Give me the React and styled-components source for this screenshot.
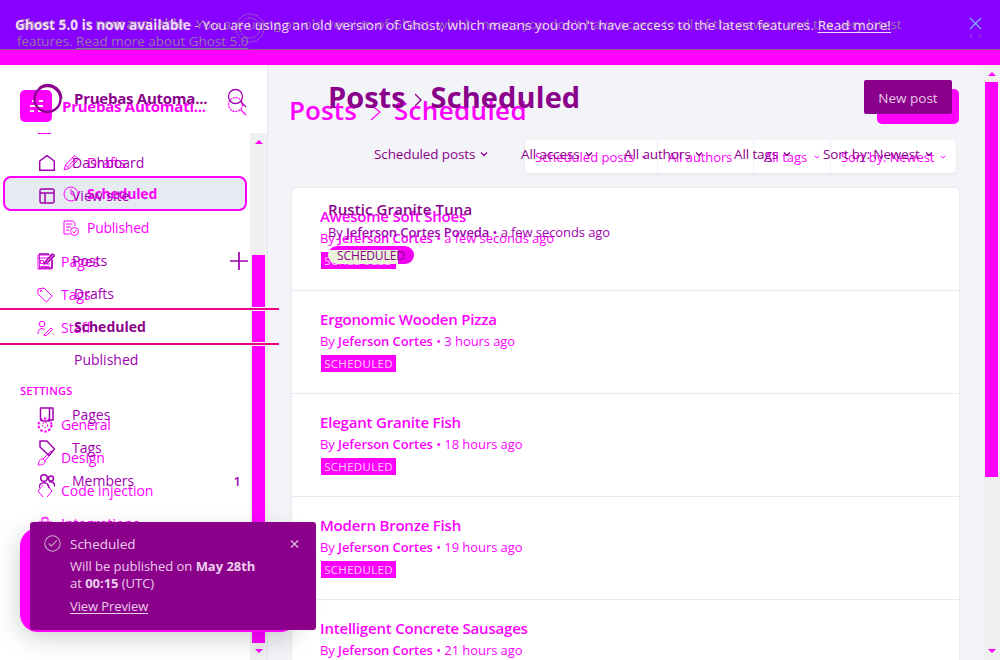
import React from "react";
import styled, { createGlobalStyle } from "styled-components";

const HOT = "#ff00ff";
const DARK = "#8b008b";
const VIOLET = "#a000b0";

const Global = createGlobalStyle`
  * { box-sizing: border-box; }
  body { margin: 0; background: #fff; overflow: hidden; font-family: "Open Sans", "Noto Sans", sans-serif; }
`;

const Page = styled.div`
  position: relative;
  width: 1000px;
  height: 660px;
  overflow: hidden;
  display: flex;
  flex-direction: column;
`;

const Overlay = styled.div`
  position: absolute;
  inset: 0;
  display: flex;
  flex-direction: column;
  pointer-events: none;
`;

const Text = styled.span`
  display: block;
  white-space: pre;
  flex: none;
  font-size: ${(p) => p.$size || 14}px;
  font-weight: ${(p) => p.$weight || 400};
  letter-spacing: ${(p) => p.$track || 0}px;
  line-height: ${(p) => p.$line || 20}px;
  color: ${(p) => p.$color || HOT};
  b { font-weight: ${(p) => p.$strong || 600}; }
  u { text-underline-offset: 2px; }
`;

const Banner = styled.header`
  flex: none;
  height: 65px;
  background: linear-gradient(#8800ff 49px, #8c5c9c 49px, #8c5c9c 50px, ${HOT} 50px);
  padding: 16px 0 0 17px;
`;

const BannerFront = styled.div`
  flex: none;
  display: flex;
  justify-content: space-between;
  height: 65px;
  padding: 15px 18px 0 15px;
`;

const Body = styled.div`
  display: flex;
  flex: 1;
  min-height: 0;
`;

const Sidebar = styled.aside`
  width: 268px;
  flex: none;
  background: ${(p) => (p.$clear ? "transparent" : "#fff")};
  border-right: 1px solid ${(p) => (p.$clear ? "transparent" : "#e4e8ef")};
  display: flex;
  flex-direction: column;
`;

const SiteHeader = styled.div`
  display: flex;
  align-items: center;
  flex: none;
  height: ${(p) => p.$h}px;
  padding: ${(p) => p.$pad};
  gap: 10px;
`;

const SiteIcon = styled.div`
  width: 32px;
  height: 32px;
  border-radius: 5px;
  background: ${HOT};
  display: grid;
  place-items: center;
`;

const Push = styled.div`
  margin-left: auto;
  margin-right: ${(p) => p.$end || 0}px;
  padding-top: ${(p) => p.$top || 0}px;
  display: flex;
`;

const Scroller = styled.div`
  display: flex;
  flex: 1;
  min-height: 0;
`;

const Nav = styled.nav`
  width: 250px;
  flex: none;
  display: flex;
  flex-direction: column;
  overflow: hidden;
`;

const Dash = styled.i`
  width: 13px;
  height: 1px;
  flex: none;
  margin: 0 0 12px 38px;
  background: ${HOT};
`;

const NavItem = styled.div`
  height: ${(p) => p.$h || 33}px;
  flex: none;
  display: flex;
  align-items: center;
  gap: ${(p) => p.$gap || 8}px;
  padding: 0 3px 0 ${(p) => p.$indent}px;
`;

const ActiveItem = styled.div`
  height: 35px;
  flex: none;
  margin: -3px 3px 0;
  display: flex;
  align-items: center;
  gap: 8px;
  padding-left: 58px;
  background: #e6eaf1;
  border: 2px solid ${HOT};
  border-radius: 8px;
`;

const Heading = styled.div`
  padding: 38px 0 9px 20px;
  flex: none;
`;

const Track = styled.div`
  width: 17px;
  flex: none;
  background: #f0f0f0;
  display: flex;
  flex-direction: column;
  align-items: center;
`;

const Arrow = styled.i`
  width: 0;
  height: 0;
  flex: none;
  margin: ${(p) => (p.$down ? 6 : 7)}px 0 ${(p) => (p.$down ? 0 : p.$after)}px;
  border: 4px solid transparent;
  border-top-width: ${(p) => (p.$down ? 4 : 0)}px;
  border-bottom-width: ${(p) => (p.$down ? 0 : 4)}px;
  border-top-color: ${(p) => (p.$down ? HOT : "transparent")};
  border-bottom-color: ${(p) => (p.$down ? "transparent" : HOT)};
`;

const Thumb = styled.i`
  width: 13px;
  flex: none;
  height: ${(p) => p.$h}px;
  margin-bottom: ${(p) => p.$after || 0}px;
  background: ${HOT};
`;

const ThumbGap = styled.i`
  width: 13px;
  height: 4px;
  flex: none;
  background: #a39aa3;
  border: solid #f6f6f6;
  border-width: 1px 0;
`;

const Main = styled.main`
  flex: 1;
  min-width: 0;
  background: ${(p) => (p.$clear ? "transparent" : "#f2f4f8")};
  display: flex;
  flex-direction: column;
`;

const TitleBar = styled.div`
  display: flex;
  align-items: flex-start;
  flex: none;
  height: ${(p) => p.$h}px;
  padding: ${(p) => p.$pad};
  gap: ${(p) => p.$gap || 10}px;
`;

const Button = styled.div`
  margin: ${(p) => p.$top}px 0 0 auto;
  width: ${(p) => p.$w}px;
  height: ${(p) => p.$h}px;
  border-radius: ${(p) => p.$r}px;
  background: ${(p) => p.$color};
  display: grid;
  place-items: center;
  padding-top: 2px;
`;

const Filters = styled.div`
  width: 431px;
  height: 33px;
  flex: none;
  margin: 0 0 15px 257px;
  background: #fff;
  border-radius: 4px;
  box-shadow: 0 1px 3px rgba(80, 90, 120, 0.12);
  display: flex;
`;

const Filter = styled.div`
  width: ${(p) => p.$w}px;
  border-right: ${(p) => (p.$last ? 0 : 1)}px solid #edf0f4;
  display: flex;
  align-items: center;
  justify-content: space-between;
  padding: 0 10px;
`;

const List = styled.section`
  width: 667px;
  margin-left: 24px;
  flex: 1;
  min-height: 0;
  overflow: hidden;
  background: #fff;
  border-radius: 5px 5px 0 0;
  box-shadow: 0 0 3px rgba(80, 90, 120, 0.12);
`;

const Post = styled.article`
  height: 103px;
  border-bottom: 1px solid #e5ebf1;
  padding: 18px 0 0 28px;
`;

const Tag = styled.div`
  width: 75px;
  height: 17px;
  margin: 2px 0 0 1px;
  background: ${HOT};
  display: grid;
  place-items: center;
`;

const Pill = styled.div`
  width: 86px;
  height: 18px;
  margin-top: 1px;
  border-radius: 9px;
  background: linear-gradient(${HOT} 4px, transparent 4px),
    linear-gradient(90deg, #eaf3d8 70px, #ee00ee 70px);
  display: flex;
  align-items: center;
  padding: 1px 0 0 9px;
`;

const FrontPost = styled.div`
  margin: 35px 0 0 60px;
`;

const FrontFilters = styled.div`
  display: flex;
  align-items: center;
  height: 20px;
  margin-left: 106px;
`;

const FrontFilter = styled.div`
  width: ${(p) => p.$w}px;
  display: flex;
  align-items: center;
  gap: 5px;
`;

const ActiveLine = styled.div`
  width: 279px;
  height: 37px;
  flex: none;
  margin: -2px 0;
  border: solid #ee0088;
  border-width: 2px 0;
  padding-left: 74px;
  display: flex;
  align-items: center;
`;

const FrontNav = styled.div`
  width: 250px;
  display: flex;
  flex-direction: column;
  padding-top: 13px;
`;

const ToastBack = styled.div`
  position: absolute;
  left: 20px;
  top: 528px;
  width: 278px;
  height: 104px;
  border-radius: 18px;
  background: ${HOT};
  box-shadow: 0 5px 26px rgba(0, 0, 0, 0.2);
`;

const Toast = styled.div`
  position: absolute;
  left: 30px;
  top: 522px;
  width: 286px;
  height: 108px;
  border-radius: 3px;
  background: ${DARK};
  display: flex;
  gap: 9px;
  padding: 13px 17px 0 14px;
`;

const ToastText = styled.div`
  flex: 1;
  display: flex;
  flex-direction: column;
  gap: 4px;
  margin-top: -1px;
`;

const Rings = styled.svg`
  position: absolute;
  left: 235px;
  top: 13px;
`;

const Svg = ({ w = 16, h = w, box = "0 0 16 16", color = HOT, sw = 1, children }) => (
  <svg width={w} height={h} viewBox={box} fill="none" stroke={color} strokeWidth={sw}
    strokeLinejoin="round" style={{ flex: "none" }}>
    {children}
  </svg>
);

const icons = {
  pencil: <path d="M1 15l1.500-5L10 2l2-1.500 3 3L14 6 6 13.500zM9.500 3l3.500 3.500M2.500 10l3.500 3.500M4.500 12l7-7.500" />,
  clock: <><circle cx="8" cy="8" r="7" /><path d="M8 3v5l3.500 1.500" /></>,
  published: <><path d="M7 14H1V1h9l2 2v3M3 4h6M3 7h5M3 10h3" /><circle cx="11.500" cy="11.500" r="4" /><path d="M9.500 11.500l1.500 1.500 2.500-3" /></>,
  pages: <path d="M1 1h14v14H1zM1 4h14M3.500 6.500h3v3h-3zM9 7h4M9 10h4M3.500 12.500h9" />,
  compose: <path d="M10 1H0v14h13V7M6 9l7.500-8L15.500 2.500 8 10l-3 1z" />,
  tag: <><path d="M1 2l6-1 8 8-5.500 6L1 7z" /><circle cx="4" cy="4" r=".7" /></>,
  tagPlain: <path d="M1 1h7l7.500 8L10 15.500 1 7z" />,
  staff: <><circle cx="5" cy="4" r="2.800" /><path d="M1 14c0-7 6-6 7-4M8 14l6-6 1.500 1.500-6 6H7z" /></>,
  gear: <><circle cx="8" cy="8" r="6.500" strokeWidth="2" strokeDasharray="2.500 1.600" /><circle cx="8" cy="8" r="2.600" strokeDasharray="2 1" /></>,
  brush: <path d="M6 9l8-8 1 1-7 9M6 9c-4-1-4 4-5 6 3 0 7 0 7-4z" />,
  code: <path d="M6 2L1 8l5 6M10 2l5 6-5 6" />,
  box: <path d="M1 6h14v9H1zM5 6V2h6v4M5 3l3-2 3 2" />,
  home: <path d="M.7 6L8 .7 15.300 6v9.300H.7z" />,
  site: <><rect x="1" y="1" width="14" height="14" rx="1.500" /><path d="M1 5h14M6 5v10" /></>,
  book: <path d="M1.500 1h9v13h-6c-2 0-3-1-3-3zM10.500 1h3.500v12h-3.500" />,
  members: <><circle cx="5" cy="5" r="3.300" /><circle cx="12" cy="5.500" r="2.500" /><path d="M0 15c0-7 10-7 10 0M10 9c3-1 6 1 6 5" /></>,
};

const Chevron = ({ color, w = 8 }) => (
  <Svg w={w} box="0 0 8 8" color={color} sw={1.3}><path d="M1 2.500l3 3 3-3" /></Svg>
);

const Search = ({ color = HOT, dash }) => (
  <Svg w={20} box="0 0 20 20" color={color} sw={1.3}>
    <circle cx="8.500" cy="8.500" r="7" strokeDasharray={dash} /><path d="M13.500 13.500l5.500 5.500" />
  </Svg>
);

const Item = ({ icon, label, sub, track = 0 }) => (
  <NavItem $indent={sub ? 63 : 37}>
    <Svg>{icons[icon]}</Svg>
    <Text $track={track}>{label}</Text>
  </NavItem>
);

const FrontItem = ({ icon, label, children }) => (
  <NavItem $indent={39} $gap={17}>
    <Svg color={VIOLET} sw={1.5}>{icons[icon]}</Svg>
    <Text $color={VIOLET}>{label}</Text>
    {children}
  </NavItem>
);

const posts = [
  ["Awesome Soft Shoes", "a few seconds ago"],
  ["Ergonomic Wooden Pizza", "3 hours ago"],
  ["Elegant Granite Fish", "18 hours ago"],
  ["Modern Bronze Fish", "19 hours ago"],
  ["Intelligent Concrete Sausages", "21 hours ago"],
];

const frontFilters = [
  ["Scheduled posts", 147],
  ["All access", 103],
  ["All authors", 110],
  ["All tags", 89],
  ["Sort by: Newest", 120],
];

export default function App() {
  return (
    <>
      <Global />
      <Page>
        <Banner>
          <Text $size={13.5} $line={17} $color="#9577a5" $track={-0.02}><b>Ghost 5.0 is now available</b> - You are using an old version of Ghost, which means you don't have access to all of the newest and the very latest{"\n"}features. <u>Read more about Ghost 5.0</u></Text>
        </Banner>
        <Body>
          <Sidebar>
            <SiteHeader $h={68} $pad="14px 20px 0 20px">
              <SiteIcon><Svg w={16} color="#f6f6f6" sw={1.8}><path d="M4 3h4M11 3h4M2 8h13M2 13h4M10 13h4" /></Svg></SiteIcon>
              <Text $size={15} $weight={700} $line={24} $track={-0.25}>Pruebas Automati...</Text>
              <Push><Search dash="2 1" /></Push>
            </SiteHeader>
            <Scroller>
              <Nav>
                <Dash />
                <Item sub icon="pencil" label="Drafts" track={-0.2} />
                <ActiveItem><Svg>{icons.clock}</Svg><Text $weight={700} $track={-0.2}>Scheduled</Text></ActiveItem>
                <Item sub icon="published" label="Published" track={-0.25} />
                <NavItem $h={1} $indent={0} />
                <Item icon="pages" label="Pages" />
                <Item icon="tag" label="Tags" />
                <Item icon="staff" label="Staff" />
                <Heading><Text $size={11} $weight={600} $line={17} $track={0.25}>SETTINGS</Text></Heading>
                <Item icon="gear" label="General" track={-0.3} />
                <Item icon="brush" label="Design" track={-0.1} />
                <Item icon="code" label="Code injection" track={-0.05} />
                <Item icon="box" label="Integrations" />
              </Nav>
              <Track>
                <Arrow $after={111} />
                <Thumb $h={52} /><ThumbGap /><Thumb $h={31} /><ThumbGap /><Thumb $h={297} />
                <Arrow $down />
              </Track>
            </Scroller>
          </Sidebar>
          <Main>
            <TitleBar $h={75} $pad="24px 24px 0 21px">
              <Text $size={26} $weight={600} $line={42} $track={0.1}>Posts</Text>
              <Svg w={17} h={42} box="0 0 17 42" sw={1.2}><path d="M4 16l9 7-9 8" /></Svg>
              <Text $size={26} $weight={600} $line={42} $track={0.35}>Scheduled</Text>
              <Button $top={0} $w={82} $h={35} $r={5} $color={HOT} />
            </TitleBar>
            <Filters>
              <Filter $w={133}><Text $size={13}>Scheduled posts</Text><Chevron w={6} /></Filter>
              <Filter $w={96}><Text $size={13} $track={-0.1}>All authors</Text></Filter>
              <Filter $w={77}><Text $size={13}>All tags</Text><Chevron w={6} /></Filter>
              <Filter $w={125} $last><Text $size={13} $track={-0.1}>Sort by: Newest</Text><Chevron w={6} /></Filter>
            </Filters>
            <List>
              {posts.map(([title, time]) => (
                <Post key={title}>
                  <Text $size={15} $weight={600} $track={-0.2}>{title}</Text>
                  <Text $size={13} $line={24} $track={-0.07}>By <b>Jeferson Cortes</b> • {time}</Text>
                  <Tag><Text $size={11.5} $line={15} $color="#ffd0ff" $track={0.3}>SCHEDULED</Text></Tag>
                </Post>
              ))}
            </List>
          </Main>
          <Track><Arrow $after={6} /><Thumb $h={395} $after={166} /><Arrow $down /></Track>
        </Body>
        <Rings width="30" height="30" viewBox="0 0 30 30" fill="none" stroke="#9b78a8">
          <circle cx="15" cy="15" r="14" strokeDasharray="2 1" /><circle cx="15" cy="15" r="10" strokeDasharray="2 1" />
        </Rings>
        <Overlay>
          <BannerFront>
            <Text $size={13.5} $strong={700} $color="#f3d8ff" $track={0.09}><b>Ghost 5.0 is now available</b> - You are using an old version of Ghost, which means you don't have access to the latest features. <u>Read more!</u></Text>
            <Svg w={13} h={24} box="0 0 13 24" color="#75b5ff" sw={1.2}><path d="M1 3l11 11M12 3L1 14" /><path d="M1 22l3-3M12 22l-3-3" stroke="#927ba5" strokeDasharray="1 1" /></Svg>
          </BannerFront>
          <Body>
            <Sidebar $clear>
              <SiteHeader $h={66} $pad="0 20px 0 32px">
                <Svg w={32} h={32} box="0 0 32 32" color={DARK} sw={2.4}><circle cx="15.500" cy="17" r="13" /><path d="M7 6C15-1 29 3 30 17" strokeWidth="1.300" /></Svg>
                <Text $size={15} $weight={700} $line={22} $color={DARK} $track={-0.25}>Pruebas Automa...</Text>
                <Push><Search color={VIOLET} /></Push>
              </SiteHeader>
              <FrontNav>
                <NavItem $h={2} $indent={0} />
                <FrontItem icon="home" label="Dashboard" />
                <FrontItem icon="site" label="View site" />
                <NavItem $h={32} $indent={0} />
                <FrontItem icon="compose" label="Posts"><Push $end={-1}><Svg w={18} box="0 0 18 18" color={VIOLET} sw={1.7}><path d="M9 0v18M0 9h18" /></Svg></Push></FrontItem>
                <NavItem $indent={74}><Text $color={VIOLET}>Drafts</Text></NavItem>
                <ActiveLine><Text $weight={700} $color={DARK}>Scheduled</Text></ActiveLine>
                <NavItem $indent={74}><Text $color={VIOLET}>Published</Text></NavItem>
                <NavItem $h={22} $indent={0} />
                <FrontItem icon="book" label="Pages" />
                <FrontItem icon="tagPlain" label="Tags" />
                <FrontItem icon="members" label="Members"><Push $end={6}><Text $weight={600} $size={13} $color={VIOLET}>1</Text></Push></FrontItem>
              </FrontNav>
            </Sidebar>
            <Main $clear>
              <TitleBar $h={79} $gap={9} $pad="11px 48px 0 60px">
                <Text $size={29} $weight={700} $line={42} $color={DARK}>Posts</Text>
                <Svg w={7} h={42} box="0 0 7 42" color={DARK} sw={1.3}><path d="M0 18l6 6-6 6" /></Svg>
                <Text $size={29} $weight={700} $line={42} $color={DARK} $track={0.1}>Scheduled</Text>
                <Button $top={4} $w={88} $h={34} $r={2} $color={DARK}><Text $size={13.5} $color="#e6c9e6">New post</Text></Button>
              </TitleBar>
              <FrontFilters>
                {frontFilters.map(([label, w]) => (
                  <FrontFilter key={label} $w={w}><Text $size={13.5} $weight={500} $track={-0.12} $color={DARK}>{label}</Text><Chevron color={DARK} /></FrontFilter>
                ))}
              </FrontFilters>
              <FrontPost>
                <Text $size={15} $weight={600} $color={DARK} $track={0.1}>Rustic Granite Tuna</Text>
                <Text $size={13} $line={26} $color={VIOLET} $track={-0.09}>By <b>Jeferson Cortes Poveda</b> • a few seconds ago</Text>
                <Pill><Text $size={12} $weight={500} $color={DARK} $line={16} $track={-0.1}>SCHEDULED</Text></Pill>
              </FrontPost>
            </Main>
          </Body>
        </Overlay>
        <ToastBack />
        <Toast>
          <Svg w={17} color="#c9a5c9"><circle cx="8" cy="8" r="7.300" /><path d="M4.500 8l2.500 2.500L12 5" /></Svg>
          <ToastText>
            <Text $size={13.5} $color="#ecceec">Scheduled</Text>
            <Text $size={13} $line={17} $strong={700} $color="#ecceec" $track={-0.03}>Will be published on <b>May 28th</b>{"\n"}at <b>00:15</b> (UTC)</Text>
            <Text $size={13} $line={20} $color="#ecceec" $track={-0.1}><u>View Preview</u></Text>
          </ToastText>
          <Svg w={9} h={18} box="0 0 9 18" color="#dbb8db" sw={1.4}><path d="M1 5.500l7 7M8 5.500l-7 7" /></Svg>
        </Toast>
      </Page>
    </>
  );
}
